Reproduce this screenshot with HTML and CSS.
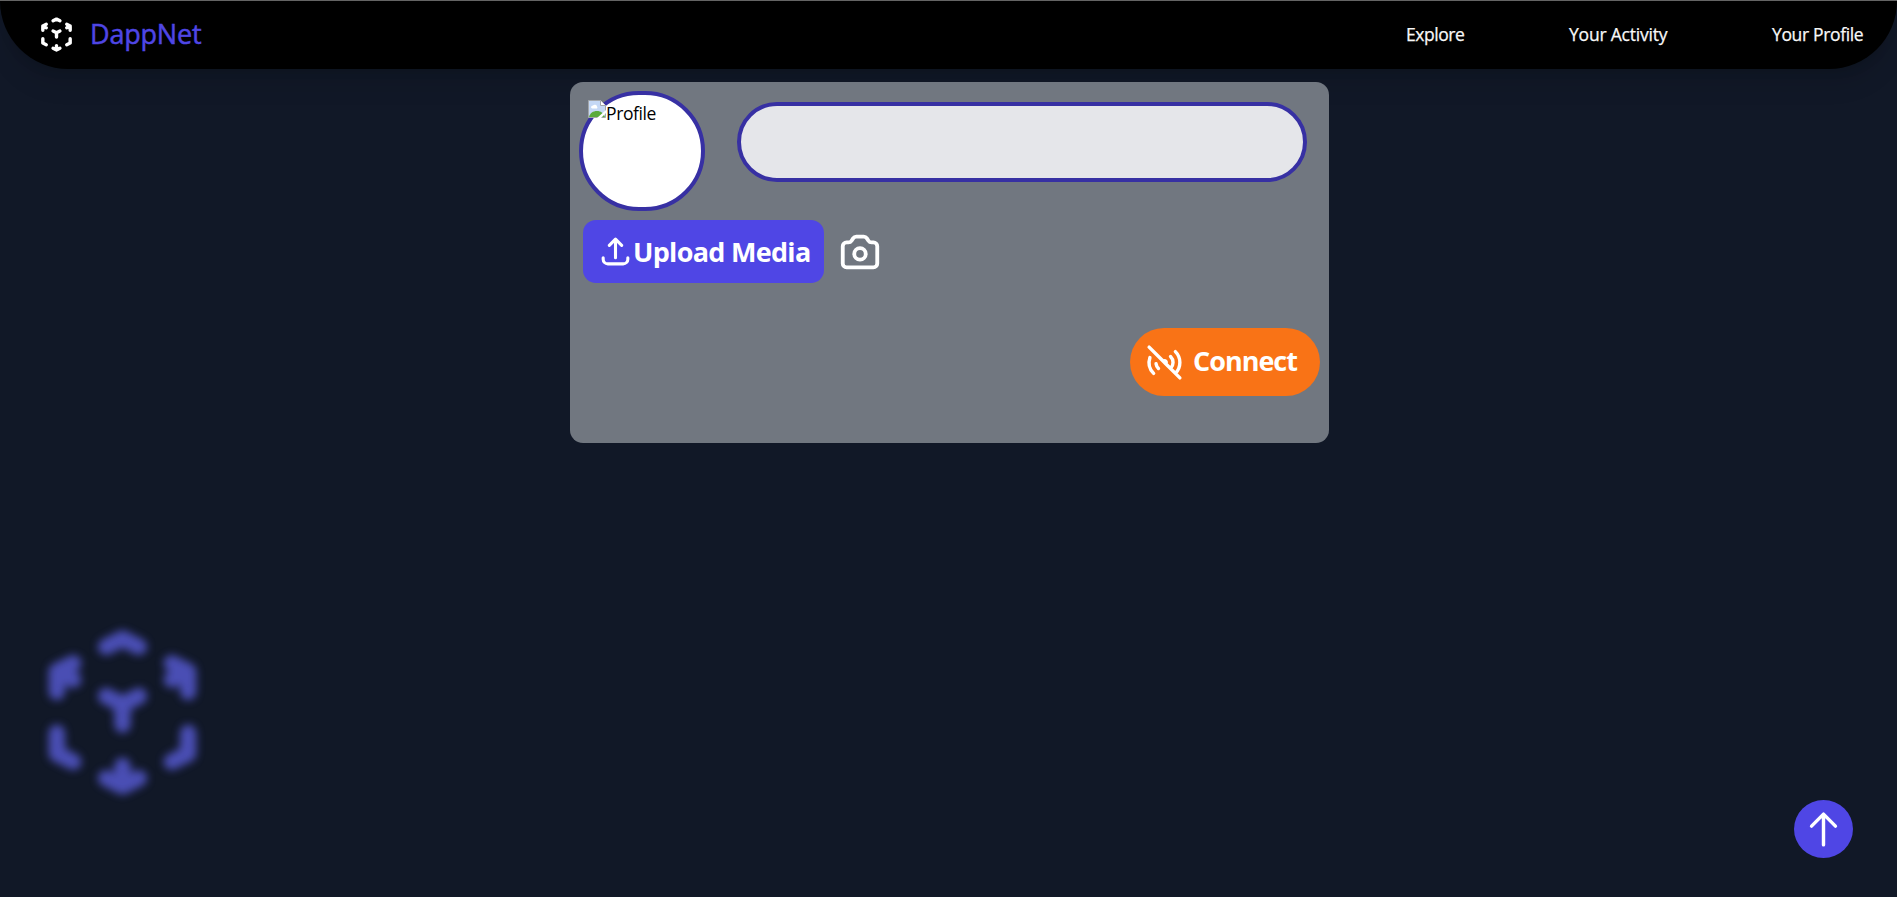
FILE: index.html
```html
<!DOCTYPE html>
<html lang="en">
<head>
<meta charset="utf-8">
<title>DappNet</title>
<link rel="stylesheet" href="styles.css">
</head>
<body>
<header class="nav">
  <a class="brand">
    <svg class="icon brand-icon" viewBox="0 0 24 24"><path d="M14 10l-2 1m0 0l-2-1m2 1v2.5M20 7l-2 1m2-1l-2-1m2 1v2.5M14 4l-2-1-2 1M4 7l2-1M4 7l2 1M4 7v2.5M12 21l-2-1m2 1l2-1m-2 1v-2.5M6 18l-2-1v-2.5M18 18l2-1v-2.5"/></svg>
    <span class="brand-name">DappNet</span>
  </a>
  <nav class="links">
    <a class="link-explore">Explore</a>
    <a class="link-activity">Your Activity</a>
    <a class="link-profile">Your Profile</a>
  </nav>
</header>
<main class="card">
  <div class="compose">
    <div class="avatar">
      <svg class="broken" viewBox="0 0 18 18">
        <path d="M.5.5h12l5 5v12H.5z" fill="#c5d8f5" stroke="#a3a6aa"/>
        <path d="M3 7.5a2 2 0 0 1 2-2 2.300 2.300 0 0 1 4 1 1.500 1.500 0 0 1 0 2H4z" fill="#fff"/>
        <path d="M1 17c1-4 4-6 8-6s6 2 8 6z" fill="#5aab3c"/>
        <path d="M12.500.5v5h5" fill="#fff" stroke="#a3a6aa"/>
        <path d="M9 18L18 10v3l-5 5z" fill="#fff"/>
      </svg>
      <span class="alt">Profile</span>
    </div>
    <div class="field"></div>
  </div>
  <div class="media">
    <button class="upload">
      <svg class="icon upload-icon" viewBox="0 0 24 24"><path d="M4 16v1a3 3 0 003 3h10a3 3 0 003-3v-1m-4-8l-4-4m0 0L8 8m4-4v12"/></svg>
      <span class="upload-label">Upload Media</span>
    </button>
    <svg class="icon camera" viewBox="0 0 24 24"><path d="M3 9a2 2 0 012-2h.93a2 2 0 001.664-.89l.812-1.22A2 2 0 0110.07 4h3.86a2 2 0 011.664.89l.812 1.22A2 2 0 0018.07 7H19a2 2 0 012 2v9a2 2 0 01-2 2H5a2 2 0 01-2-2V9z"/><path d="M15 13a3 3 0 11-6 0 3 3 0 016 0z"/></svg>
  </div>
  <button class="connect">
    <svg class="icon connect-icon" viewBox="0 0 24 24"><path d="M18.364 5.636a9 9 0 010 12.728m0 0l-2.829-2.829m2.829 2.829L21 21M15.536 8.464a5 5 0 010 7.072m0 0l-2.829-2.829m-4.243 2.829a4.978 4.978 0 01-1.414-2.83m-1.414 5.658a9 9 0 01-2.167-9.238m7.824 2.167a1 1 0 111.414 1.414m-1.414-1.414L3 3m8.293 8.293l1.414 1.414"/></svg>
    <span class="connect-label">Connect</span>
  </button>
</main>
<svg class="icon cube" viewBox="0 0 24 24"><path d="M14 10l-2 1m0 0l-2-1m2 1v2.5M20 7l-2 1m2-1l-2-1m2 1v2.5M14 4l-2-1-2 1M4 7l2-1M4 7l2 1M4 7v2.5M12 21l-2-1m2 1l2-1m-2 1v-2.5M6 18l-2-1v-2.5M18 18l2-1v-2.5"/></svg>
<button class="to-top" aria-label="Top"><svg class="icon" viewBox="0 0 24 24"><path d="M5 10l7-7m0 0l7 7m-7-7v18"/></svg></button>
</body>
</html>
```
FILE: styles.css
```css
* { box-sizing: border-box; }
body {
  margin: 0;
  height: 897px;
  overflow: hidden;
  background: #111827;
  font-family: "Open Sans", "Noto Sans", sans-serif;
  border-top: 1px solid #646464;
}
button { border: 0; padding: 0; font: inherit; color: #fff; }
.icon {
  flex: none;
  fill: none;
  stroke: #fff;
  stroke-width: 2;
  stroke-linecap: round;
  stroke-linejoin: round;
}
.nav {
  display: flex;
  align-items: center;
  justify-content: space-between;
  height: 68px;
  padding: 0 34px 0 36px;
  background: #000;
  border-radius: 0 0 68px 68px;
  box-shadow: 0 20px 25px -5px rgba(0, 0, 0, .1), 0 8px 10px -6px rgba(0, 0, 0, .1);
}
.brand { display: flex; align-items: center; gap: 13px; margin-top: -1px; }
.brand-icon { width: 41px; height: 41px; }
.brand-name {
  color: #4f46e5;
  font-size: 27px;
  line-height: 36px;
  letter-spacing: -.2px;
  -webkit-text-stroke: .5px #4f46e5;
  margin-top: -1px;
}
.links {
  display: flex;
  gap: 105px;
  margin-top: -2px;
  color: #f8f8f8;
  font-size: 17.500px;
  line-height: 28px;
  -webkit-text-stroke: .25px #f8f8f8;
}
.links a { white-space: nowrap; margin-left: -1px; margin-right: 1px; }
.link-explore { width: 58px; letter-spacing: -.45px; }
.link-activity { width: 98px; letter-spacing: -.2px; }
.link-profile { width: 90px; letter-spacing: -.35px; }
.card {
  display: flex;
  flex-direction: column;
  width: 759px;
  height: 361px;
  margin: 13px 0 0 570px;
  padding: 9px 9px 0;
  border-radius: 13px;
  background: #717780;
}
.compose { display: flex; gap: 32px; }
.avatar {
  display: flex;
  align-items: flex-start;
  width: 126px;
  height: 120px;
  padding: 5px;
  border: 4px solid #3730a3;
  border-radius: 60px;
  background: #fff;
}
.broken { flex: none; width: 18px; height: 18px; }
.alt { color: #000; font-size: 17.500px; line-height: 24px; letter-spacing: -.4px; margin-top: 1px; }
.field {
  width: 570px;
  height: 80px;
  margin-top: 11px;
  border: 4px solid #3730a3;
  border-radius: 40px;
  background: #e5e6ea;
}
.media { display: flex; align-items: center; margin: 9px 0 0 4px; gap: 13px; }
.upload {
  display: flex;
  align-items: center;
  width: 241px;
  height: 63px;
  padding-left: 14px;
  border-radius: 13px;
  background: #4f46e5;
}
.upload-icon { width: 37px; height: 37px; }
.upload-label, .connect-label { font-size: 27px; font-weight: 700; line-height: 36px; white-space: nowrap; }
.upload-label { margin: 1px 0 0 -1px; letter-spacing: -.7px; }
.connect-label { letter-spacing: -1px; margin-top: -2px; }
.camera { width: 46px; height: 46px; }
.connect {
  display: flex;
  align-items: center;
  align-self: flex-end;
  width: 190px;
  height: 68px;
  margin-top: 45px;
  padding-left: 14px;
  gap: 8px;
  border-radius: 34px;
  background: #f97316;
}
.connect-icon { width: 41px; height: 41px; }
.cube {
  position: fixed;
  left: 24px;
  top: 614px;
  width: 197px;
  height: 197px;
  stroke: #6366f1;
  opacity: .7;
  filter: blur(4px);
}
.to-top {
  position: fixed;
  right: 44px;
  bottom: 39px;
  display: flex;
  align-items: center;
  justify-content: center;
  width: 59px;
  height: 58px;
  border-radius: 50%;
  background: #4f46e5;
}
.to-top .icon { width: 41px; height: 41px; }
```
